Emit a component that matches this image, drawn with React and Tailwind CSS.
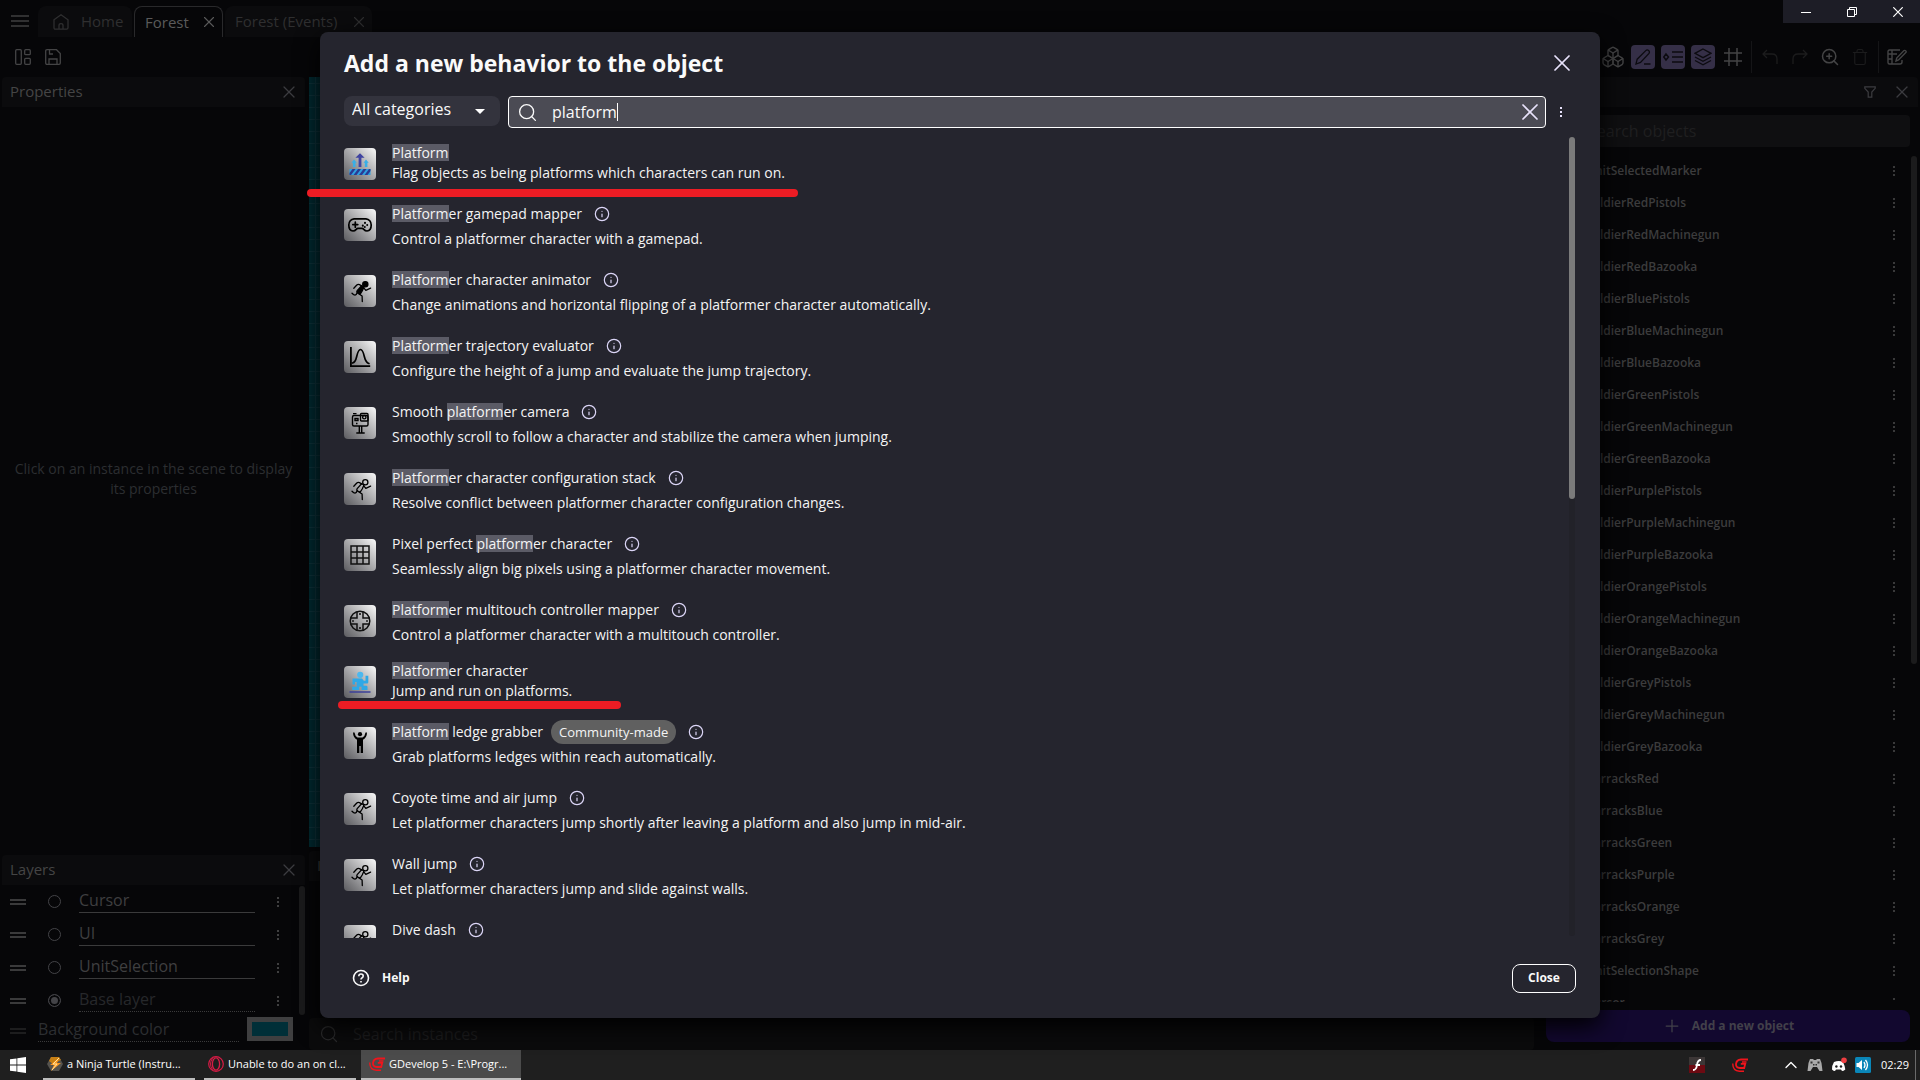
import { useState } from "react";
import {
  Boxes,
  ChevronUp,
  Info,
  Plus,
  Search,
  Trash,
  X,
  ZoomIn,
} from "lucide-react";

const QUERY = "platform";

const colors = ["Red", "Blue", "Green", "Purple", "Orange", "Grey"];
const weapons = ["Pistols", "Machinegun", "Bazooka"];

const sceneObjects = [
  "UnitSelectedMarker",
  ...colors.flatMap((c) => weapons.map((w) => `Soldier${c}${w}`)),
  ...colors.map((c) => `Barracks${c}`),
  "UnitSelectionShape",
  "Cursor",
];

const behaviors = [
  { icon: "platform", name: "Platform", text: "Flag objects as being platforms which characters can run on.", core: true },
  { icon: "gamepad", name: "Platformer gamepad mapper", text: "Control a platformer character with a gamepad." },
  { icon: "runnerFilled", name: "Platformer character animator", text: "Change animations and horizontal flipping of a platformer character automatically." },
  { icon: "curve", name: "Platformer trajectory evaluator", text: "Configure the height of a jump and evaluate the jump trajectory." },
  { icon: "camera", name: "Smooth platformer camera", text: "Smoothly scroll to follow a character and stabilize the camera when jumping." },
  { icon: "runner", name: "Platformer character configuration stack", text: "Resolve conflict between platformer character configuration changes." },
  { icon: "grid", name: "Pixel perfect platformer character", text: "Seamlessly align big pixels using a platformer character movement." },
  { icon: "dpad", name: "Platformer multitouch controller mapper", text: "Control a platformer character with a multitouch controller." },
  { icon: "character", name: "Platformer character", text: "Jump and run on platforms.", core: true },
  { icon: "grabber", name: "Platform ledge grabber", text: "Grab platforms ledges within reach automatically.", community: true },
  { icon: "runner", name: "Coyote time and air jump", text: "Let platformer characters jump shortly after leaving a platform and also jump in mid-air." },
  { icon: "runner", name: "Wall jump", text: "Let platformer characters jump and slide against walls." },
  { icon: "runner", name: "Dive dash" },
];

const Runner = ({ filled }) => (
  <g fill="none" stroke="#000" strokeWidth="1.3" strokeLinecap="round" strokeLinejoin="round">
    <circle cx="21.3" cy="9.2" r="2.6" fill={filled ? "#000" : "none"} />
    <path d="M9.8 13.2l3-3.200q1.200-1.100 2.600-.4l2.400 1.200" />
    <path
      d="M17.600 10.800l-4.400 4.800q-1 1.500.6 2.500l2.200 1.300 2.200-3.400 1.600-3.600q-.4-1.400-2.200-1.600z"
      fill={filled ? "#000" : "none"}
    />
    <path d="M19.800 12.800l2 2.500 4.800-2.200M13.200 17.800q-1.600 4.400-5.200.4M15.400 19.200l2.700 1.800.2 5.500" />
  </g>
);

const drawings = {
  platform: (
    <>
      <path d="M16 5.300l-4.600 4.400h3.200V19h2.800V9.700h3.200z" fill="#3f43a0" />
      <path d="M10 11.500l-2.500 3.200h1.400V19h2.600v-4.300h1.300zM22 11.500l-2.500 3.200h1.300V19h2.600v-4.300h1.300z" fill="#39aee6" />
      <path d="M5.500 21h21v6h-21z" fill="#2f9fe0" />
      <path d="M8.500 21h3l-4.500 6h-1.500v-2zM14 21h3l-4.500 6h-3zM19.500 21h3l-4.500 6h-3zM25 21h1.500v2l-3 4h-3z" fill="#2b3a92" />
    </>
  ),
  gamepad: (
    <g fill="none" stroke="#000" strokeWidth="1.700" strokeLinecap="round">
      <path d="M10 9.800h12a5.500 6 0 0 1 5.200 6.200q0 5.700-4.200 6-1.800 0-3.200-1.600-.8-1-1.800-1h-4q-1 0-1.800 1Q10.800 22 9 22q-4.200-.3-4.200-6A5.500 6 0 0 1 10 9.800z" />
      <path d="M8.800 15.600h5M11.300 13.200v5" />
      <path d="M21 13.800v.1M23.200 16v.1M18.800 16.600v.1M20.800 18v.1" strokeWidth="2" />
    </g>
  ),
  runnerFilled: <Runner filled />,
  runner: <Runner />,
  curve: (
    <g fill="none" stroke="#000" strokeLinecap="square">
      <path d="M6.900 6.800v18.300h18.400" strokeWidth="1.800" />
      <path d="M8.500 22q2.800-.5 4.200-6.500Q14.300 8.500 16.500 8.500t3.800 7Q21.800 21.500 24.800 22.500" strokeWidth="1.700" />
    </g>
  ),
  camera: (
    <g fill="none" stroke="#000" strokeWidth="1.400">
      <rect x="8.500" y="8.500" width="15.500" height="10.500" rx="1.500" />
      <rect x="16.500" y="6.500" width="7.500" height="7.500" rx="1" />
      <circle cx="20.300" cy="10.200" r="1.700" />
      <path d="M9 6.600h3.500M11 11.500h3v2h-3zM12 16.500h1.500M15.300 19v7M17.700 19v7M12.300 26h8.400" />
    </g>
  ),
  grid: (
    <path
      d="M7 7h18v18H7zM13 7v18M19 7v18M7 13h18M7 19h18"
      fill="none"
      stroke="#111"
      strokeWidth="1.500"
    />
  ),
  dpad: (
    <g fill="none" stroke="#111" strokeWidth="1.500">
      <circle cx="16" cy="16" r="9.800" />
      <path d="M13 6.700V13H6.700M19 6.700V13h6.300M13 25.300V19H6.700M19 25.300V19h6.300" />
      <path d="M15.200 9h1.600M15.200 23h1.600M9 15.200v1.600M23 15.200v1.600" strokeWidth="1.800" />
    </g>
  ),
  character: (
    <>
      <circle cx="16.200" cy="8.800" r="3.100" fill="#4bb8ef" />
      <path
        d="M8.500 12.500h9.500l1.800 2.200h1.700V9.800h2.800v6.500q0 1.200-1.200 1.200h-3.600v2.200h2.800q1.200 0 1.200 1.200V24h-6v-3.300h-2.300V24h-7v-3.300h4.500v-4.700h-1.700v2.500H8.500z"
        fill="#2fa8e6"
      />
      <path d="M5.500 26h21" stroke="#3b3f99" strokeWidth="1.500" />
    </>
  ),
  grabber: (
    <>
      <circle cx="16" cy="7.200" r="2.100" />
      <path d="M9 5.500h1.500q.5 3.500 3 5h5q2.500-1.500 3-5H23q0 5-4 7.200V26h-2.300v-7h-1.400v7H13V12.700Q9 10.500 9 5.500z" />
    </>
  ),
};

const BehaviorIcon = ({ kind }) => (
  <span className="h-8 w-8 shrink-0 overflow-hidden rounded bg-linear-to-bl from-[#fafafa] to-[#5c5c60]">
    <svg viewBox="0 0 32 32" className="h-8 w-8">
      {drawings[kind]}
    </svg>
  </span>
);

const Highlighted = ({ text }) => {
  const at = text.toLowerCase().indexOf(QUERY);
  if (at < 0) return <span>{text}</span>;
  return (
    <span className="whitespace-pre">
      {text.slice(0, at)}
      <mark className="inline-block h-[17px] bg-[#5b5b66] leading-[17px] text-inherit">
        {text.slice(at, at + QUERY.length)}
      </mark>
      {text.slice(at + QUERY.length)}
    </span>
  );
};

const Dots = () => (
  <svg viewBox="0 0 2 10" fill="currentColor" className="h-[10px] w-[2px]">
    <path d="M0 0h2v2H0zM0 4h2v2H0zM0 8h2v2H0z" />
  </svg>
);

const IconButton = ({ label, className = "", children }) => (
  <button aria-label={label} className={`flex h-6 w-6 items-center justify-center ${className}`}>
    {children}
  </button>
);

const GDevelopLogo = () => (
  <svg viewBox="0 0 16 16" className="h-4 w-4" fill="none" stroke="#f0141c">
    <path d="M16 2.500H9Q4.500 2.800 4 7q-.2 3.800 3.800 4h4.400l1-4.200H8.800" strokeWidth="1.800" />
    <path d="M.8 6.500Q.5 13.800 7.500 14.200h4.500M14.500 5H10" strokeWidth="1.400" />
  </svg>
);

const PanelHeader = ({ title, children }) => (
  <div className="flex h-[30px] shrink-0 items-center justify-between rounded-t bg-[#0b0b0d] pr-1 pl-2">
    <h2 className="pb-0.5 text-[15px] text-[#454545]">{title}</h2>
    <div className="flex gap-2 text-[#3c3c40]">{children}</div>
  </div>
);

const TopBar = () => (
  <header className="flex h-[37px] shrink-0 items-end">
    <button aria-label="Menu" className="mr-1 ml-2 flex h-8 w-[26px] items-center text-[#3f3f3f]">
      <svg viewBox="0 0 18 12" className="ml-[3px] h-3 w-[18px]" stroke="currentColor" strokeWidth="1.500">
        <path d="M0 1h18M0 6h18M0 11h18" />
      </svg>
    </button>
    <nav className="flex h-[31px] gap-0.5 text-[15px] text-[#2f2f30]">
      <a href="#home" className="flex w-[94px] items-center gap-3 rounded-t-lg bg-[#0b0b0d] pl-[15px]">
        <svg viewBox="0 0 16 16" className="h-4 w-4" fill="none" stroke="currentColor" strokeWidth="1.300">
          <path d="M1 5.800L8 .8l7 5v8q0 1.400-1.400 1.400H2.400Q1 15.200 1 13.800z" />
          <path d="M6 15v-3.600q0-1.800 2-1.800t2 1.800V15" />
        </svg>
        Home
      </a>
      <div className="flex w-[89px] items-center justify-between rounded-t-lg border border-b-0 border-[#29292b] pr-1 pl-2.5 font-medium text-[#5a5a5a]">
        <a href="#forest">Forest</a>
        <button aria-label="Close Forest">
          <X size={18} strokeWidth={1.5} />
        </button>
      </div>
      <div className="flex w-[147px] items-center justify-between rounded-t-lg bg-[#0b0b0d] pr-1 pl-2.5">
        <a href="#events">Forest (Events)</a>
        <button aria-label="Close Forest (Events)">
          <X size={18} strokeWidth={1.5} />
        </button>
      </div>
    </nav>
    <div className="ml-auto flex h-[23px] self-start bg-[#1d1d26]">
      <button aria-label="Minimize" className="flex w-[46px] items-center justify-center">
        <svg viewBox="0 0 10 10" className="h-[10px] w-[10px]" stroke="#fff">
          <path d="M0 5.500h10" />
        </svg>
      </button>
      <button aria-label="Restore" className="flex w-[46px] items-center justify-center">
        <svg viewBox="0 0 10 10" className="h-[10px] w-[10px]" fill="none" stroke="#fff">
          <path d="M.5 2.500h7v7h-7zM2.500 2.500v-2h7v7h-2" />
        </svg>
      </button>
      <button aria-label="Close window" className="flex w-[45px] items-center justify-center">
        <svg viewBox="0 0 10 10" className="h-[10px] w-[10px]" stroke="#fff" strokeWidth="1.200">
          <path d="M.3.3l9.400 9.400M9.700.3L.3 9.700" />
        </svg>
      </button>
    </div>
  </header>
);

const Toolbar = () => (
  <div className="flex h-10 shrink-0 items-center justify-between pr-[11px] pl-[11px] text-[#444445]">
    <div className="flex gap-1.5">
      <IconButton label="Open panels">
        <svg viewBox="0 0 16 16" className="h-4 w-4" fill="none" stroke="currentColor" strokeWidth="1.300">
          <rect x=".7" y=".7" width="5.600" height="14.600" rx="1" />
          <rect x="9.700" y=".7" width="5.600" height="5" rx="1" />
          <rect x="9.700" y="9.300" width="5.600" height="6" rx="1" />
        </svg>
      </IconButton>
      <IconButton label="Save">
        <svg viewBox="0 0 16 16" className="h-4 w-4" fill="none" stroke="currentColor" strokeWidth="1.300">
          <path d="M2 .7h9.500l3.800 3.800V14q0 1.300-1.300 1.300H2Q.7 15.300.7 14V2Q.7.7 2 .7z" />
          <path d="M4 15v-5h8v5M4.500 1v4H8" />
        </svg>
      </IconButton>
    </div>
    <div className="flex items-center gap-1.5">
      <IconButton label="Object groups">
        <Boxes size={24} strokeWidth={1.4} />
      </IconButton>
      <IconButton label="Edit objects" className="rounded bg-[#352f47] text-[#0c0b10]">
        <svg viewBox="0 0 16 16" className="h-4 w-4" fill="none" stroke="currentColor" strokeWidth="1.300">
          <path d="M1 15l1.200-4.800L11 1.400q1.200-1 2.600.2t.4 2.800L5.500 13.400zM9 15h6.500" />
        </svg>
      </IconButton>
      <IconButton label="Instances list" className="rounded bg-[#352f47] text-[#0c0b10]">
        <svg viewBox="0 0 20 16" className="h-4 w-5" fill="none" stroke="currentColor" strokeWidth="1.500">
          <path d="M3 5L.8 8 3 11l2.500-3zM9 3h11M9 8h11M9 13h11" />
        </svg>
      </IconButton>
      <IconButton label="Layers" className="rounded bg-[#352f47] text-[#0c0b10]">
        <svg viewBox="0 0 18 18" className="h-[18px] w-[18px]" fill="none" stroke="currentColor" strokeWidth="1.400">
          <path d="M9 1l8 4.300-8 4.300-8-4.300zM1 9l8 4.300L17 9M1 12.500l8 4.300 8-4.300" />
        </svg>
      </IconButton>
      <IconButton label="Grid">
        <svg viewBox="0 0 18 18" className="h-[18px] w-[18px]" stroke="currentColor" strokeWidth="1.500">
          <path d="M5 0v18M13 0v18M0 5h18M0 13h18" />
        </svg>
      </IconButton>
      <span className="h-8 w-px bg-[#151517]" />
      <IconButton label="Undo" className="text-[#1c1c1d]">
        <svg viewBox="0 0 16 16" className="h-4 w-4" fill="none" stroke="currentColor" strokeWidth="1.300">
          <path d="M5 1L1 5l4 4M1 5h9q5 0 5 5v5" />
        </svg>
      </IconButton>
      <IconButton label="Redo" className="text-[#1c1c1d]">
        <svg viewBox="0 0 16 16" className="h-4 w-4" fill="none" stroke="currentColor" strokeWidth="1.300">
          <path d="M11 1l4 4-4 4M15 5H6q-5 0-5 5v5" />
        </svg>
      </IconButton>
      <IconButton label="Zoom in">
        <ZoomIn size={20} strokeWidth={1.8} />
      </IconButton>
      <IconButton label="Delete" className="text-[#1c1c1d]">
        <Trash size={18} strokeWidth={1.5} />
      </IconButton>
      <span className="h-8 w-px bg-[#151517]" />
      <IconButton label="Scene properties">
        <svg viewBox="0 0 20 16" className="h-4 w-5" fill="none" stroke="currentColor" strokeWidth="1.400">
          <path d="M13 1H2.500Q1 1 1 2.500v11Q1 15 2.500 15H13q2 0 2-2v-2M5 1v14M1 5h4M1 10h4M5 5h5" />
          <path d="M9 12l.7-3L17 1.600q1-.6 1.800.3t0 1.700L11.500 11z" />
        </svg>
      </IconButton>
    </div>
  </div>
);

const LayerRow = ({ name, selected, onSelect, base }) => (
  <div className="flex h-[33px] items-center pl-2.5">
    <svg viewBox="0 0 16 6" className="h-1.5 w-4" fill="#3a3a3b">
      <path d="M0 0h16v2H0zM0 4h16v2H0z" />
    </svg>
    <input
      type="radio"
      name="layer"
      aria-label={`Select ${name}`}
      checked={selected}
      onChange={onSelect}
      className="ml-[22px] h-[13px] w-[13px] appearance-none rounded-full border border-[#434347] checked:bg-[#434347] checked:shadow-[inset_0_0_0_2px_#060608]"
    />
    <input
      aria-label="Layer name"
      defaultValue={name}
      className={`ml-[18px] h-[23px] w-44 border-b bg-transparent pb-0.5 text-base outline-none ${
        base ? "border-dotted border-[#3a3a3b] text-[#26282b]" : "border-[#3a3a3b] text-[#3f3f40]"
      }`}
    />
    <button aria-label={`${name} options`} className="ml-[22px] text-[#3f3f40]">
      <Dots />
    </button>
  </div>
);

const LeftColumn = () => {
  const [layer, setLayer] = useState("Base layer");
  return (
    <aside className="mx-0.5 flex w-[303px] shrink-0 flex-col">
      <section className="flex min-h-0 flex-1 flex-col">
        <PanelHeader title="Properties">
          <IconButton label="Close properties">
            <X size={20} strokeWidth={1.5} />
          </IconButton>
        </PanelHeader>
        <div className="flex flex-1 items-center justify-center px-2 text-center">
          <p className="text-sm leading-5 text-[#2c2e31]">
            Click on an instance in the scene to display its properties
          </p>
        </div>
      </section>
      <section className="mt-1 flex h-[195px] flex-col">
        <PanelHeader title="Layers">
          <IconButton label="Close layers">
            <X size={20} strokeWidth={1.5} />
          </IconButton>
        </PanelHeader>
        <div className="-ml-0.5 flex h-[132px] justify-between">
          <div>
            {["Cursor", "UI", "UnitSelection", "Base layer"].map((name) => (
              <LayerRow
                key={name}
                name={name}
                base={name === "Base layer"}
                selected={layer === name}
                onSelect={() => setLayer(name)}
              />
            ))}
          </div>
          <div className="mt-px mb-0.5 w-1.5 rounded-full bg-[#1b1b1c]" />
        </div>
        <div className="-ml-0.5 flex h-[33px] items-start pl-2.5">
          <svg viewBox="0 0 16 6" className="mt-[11px] h-1.5 w-4" fill="#1d1d1e">
            <path d="M0 0h16v2H0zM0 4h16v2H0z" />
          </svg>
          <label
            htmlFor="background"
            className="ml-3 h-[25px] w-[201px] border-b border-dotted border-[#3a3a3b] text-base text-[#2c2e31]"
          >
            Background color
          </label>
          <button id="background" className="ml-2 h-6 w-[46px] border-[5px] border-[#3f3f40] bg-[#002f38]" />
        </div>
      </section>
    </aside>
  );
};

const SceneColumn = () => (
  <main className="mx-0.5 flex min-w-0 flex-1 flex-col">
    <div className="flex-1 bg-[#002a31] bg-[linear-gradient(#0e323a_1px,transparent_1px),linear-gradient(90deg,#0e323a_1px,transparent_1px)] bg-size-[12px_12px] bg-position-[6px_6px]" />
    <section className="mt-1 flex h-[199px] flex-col">
      <PanelHeader title="Instances list" />
      <div className="flex-1" />
      <label className="flex h-8 items-center gap-3.5 rounded bg-[#0b0b0c] pl-2.5 text-[#2a2a2b]">
        <Search size={20} strokeWidth={1.5} />
        <input
          aria-label="Search instances"
          placeholder="Search instances"
          className="flex-1 bg-transparent text-base outline-none placeholder:text-[#1d1d1e]"
        />
      </label>
    </section>
  </main>
);

const ObjectsColumn = () => (
  <aside className="mx-0.5 flex w-[380px] shrink-0 flex-col">
    <PanelHeader title="Objects">
      <IconButton label="Filter objects">
        <svg viewBox="0 0 12 12" className="h-3 w-3" fill="none" stroke="currentColor" strokeWidth="1.200">
          <path d="M.8.800h10.400v1.500L7.800 6v5.200H4.200V6L.8 2.300z" />
        </svg>
      </IconButton>
      <IconButton label="Close objects">
        <X size={20} strokeWidth={1.5} />
      </IconButton>
    </PanelHeader>
    <label className="mx-2 mt-2 flex h-8 shrink-0 items-center gap-3 rounded bg-[#0f0f11] pl-2.5 text-[#2a2a2b]">
      <Search size={20} strokeWidth={1.5} />
      <input
        aria-label="Search objects"
        placeholder="Search objects"
        className="flex-1 bg-transparent text-base outline-none placeholder:text-[#1f1f20]"
      />
    </label>
    <div className="mt-2 flex min-h-0 flex-1 justify-between">
      <ul className="flex-1 overflow-hidden">
        {sceneObjects.map((name) => (
          <li key={name} className="flex h-8 items-center pr-4 pl-5">
            <span className="h-4 w-4 rounded-sm bg-[#151517]" />
            <span className="ml-3 text-xs font-semibold text-[#3c3c3d]">{name}</span>
            <button aria-label={`${name} options`} className="ml-auto text-[#39393a]">
              <Dots />
            </button>
          </li>
        ))}
      </ul>
      <div className="mt-px mr-px h-[508px] w-1.5 rounded-full bg-[#1b1b1c]" />
    </div>
    <button className="mx-2 my-2 flex h-8 shrink-0 items-center justify-center gap-2.5 rounded-lg bg-[#12082f] text-xs font-bold text-[#42404a]">
      <Plus size={20} strokeWidth={1.5} />
      Add a new object
    </button>
  </aside>
);

const BehaviorRow = ({ behavior }) => (
  <li className="flex items-center gap-4 py-[7px]">
    <BehaviorIcon kind={behavior.icon} />
    <div className="pb-0.5 text-sm leading-5 font-medium text-[#f4f4f4]">
      <div className={behavior.core ? "flex h-5 items-center" : "flex h-[30px] items-center"}>
        <Highlighted text={behavior.name} />
        {behavior.community && (
          <span className="ml-2 flex h-6 items-center rounded-full bg-[#606060] px-2 text-[13px]">
            Community-made
          </span>
        )}
        {!behavior.core && (
          <button aria-label={`About ${behavior.name}`} className="ml-3 text-[#dcd6f7]">
            <Info size={16} strokeWidth={1.8} />
          </button>
        )}
      </div>
      <p className="h-5 whitespace-nowrap">{behavior.text}</p>
    </div>
  </li>
);

const BehaviorDialog = () => {
  const [query, setQuery] = useState(QUERY);
  return (
    <div className="absolute inset-0 flex justify-center py-8">
      <div
        role="dialog"
        aria-labelledby="dialog-title"
        className="flex w-2/3 flex-col rounded-lg bg-[#25252e] px-6 text-[#fafafa] shadow-[0_8px_24px_#000]"
      >
        <div className="flex h-16 shrink-0 items-center justify-between pb-0.5">
          <h1 id="dialog-title" className="text-[23px] font-bold">
            Add a new behavior to the object
          </h1>
          <button aria-label="Close dialog" className="text-[#e8e2fb]">
            <X size={28} strokeWidth={1.5} />
          </button>
        </div>
        <div className="flex h-10 shrink-0 items-start">
          <div className="relative w-[156px]">
            <select
              aria-label="Category"
              className="h-[30px] w-full appearance-none rounded-lg bg-[#33333d] pb-1 pl-2 text-base outline-none"
            >
              <option>All categories</option>
            </select>
            <svg viewBox="0 0 10 5" className="pointer-events-none absolute top-[13px] right-[15px] h-[5px] w-[10px]" fill="#fff">
              <path d="M0 0h10L5 5z" />
            </svg>
          </div>
          <label className="ml-2 flex h-8 flex-1 items-center rounded border border-white bg-[#4b4b54] pr-px pl-2">
            <Search size={21} strokeWidth={1.5} />
            <input
              aria-label="Search behaviors"
              value={query}
              onChange={(e) => setQuery(e.target.value)}
              className="ml-3.5 field-sizing-content bg-transparent text-base outline-none"
            />
            <span className="h-[18px] w-px bg-white" />
            <button aria-label="Clear search" onClick={() => setQuery("")} className="ml-auto text-[#e8e2fb]">
              <X size={28} strokeWidth={1.5} />
            </button>
          </label>
          <button aria-label="More options" className="flex h-8 w-[30px] items-center justify-center text-[#e8e2fb]">
            <Dots />
          </button>
        </div>
        <div className="flex min-h-0 flex-1">
          <ul className="flex-1 overflow-hidden">
            {behaviors.map((b) => (
              <BehaviorRow key={b.name} behavior={b} />
            ))}
          </ul>
          <div className="mt-px mr-px mb-0.5 w-1.5 rounded-full bg-[#222229]">
            <div className="h-[362px] rounded-full bg-[#7b7b7b]" />
          </div>
        </div>
        <div className="flex h-20 shrink-0 items-center justify-between">
          <button className="flex items-center gap-3 pl-2 text-xs font-bold">
            <svg viewBox="0 0 18 18" className="h-[18px] w-[18px]" fill="none" stroke="currentColor" strokeWidth="1.600">
              <circle cx="9" cy="9" r="7.500" />
              <path d="M6.800 7.200Q6.800 5 9 5t2.200 2q0 1.300-1.300 2-.9.500-.9 1.600M9 12v1.400" />
            </svg>
            Help
          </button>
          <button className="h-[29px] w-16 rounded-lg border border-white text-xs font-bold">Close</button>
        </div>
      </div>
    </div>
  );
};

const Taskbar = () => (
  <footer className="flex h-[30px] shrink-0 bg-[#1f1f1f] text-[11px] whitespace-nowrap text-white">
    <button aria-label="Start" className="mr-4 ml-2.5">
      <svg viewBox="0 0 16 16" className="h-4 w-4" fill="#fff">
        <path d="M0 2.300l6.500-.9v6.200H0zM7.300 1.300L16 0v7.600H7.300zM0 8.400h6.500v6.200L0 13.700zM7.300 8.400H16V16l-8.700-1.300z" />
      </svg>
    </button>
    <button className="ml-px flex w-[152px] items-center gap-1 border-b-2 border-[#bdbdbd] pl-1">
      <svg viewBox="0 0 16 16" className="h-4 w-4 shrink-0">
        <path d="M4 1h8l4 7-4 7H4L0 8z" fill="#55534e" />
        <path d="M4 1h8l2 3-8 4-4-3z" fill="#c77f14" />
        <path d="M12 2L3 9h4l-3 6 10-8h-4z" fill="#ff9a1f" />
        <path d="M12 2L6 8h4l-5 6" stroke="#ffe2a0" fill="none" />
      </svg>
      a Ninja Turtle (Instru...
    </button>
    <button className="ml-[9px] flex w-[152px] items-center gap-1 border-b-2 border-[#bdbdbd] pl-1">
      <svg viewBox="0 0 16 16" className="h-4 w-4 shrink-0" fill="none" stroke="#d81b46">
        <circle cx="8" cy="8" r="7.300" strokeWidth="1.200" />
        <ellipse cx="8" cy="8" rx="3.600" ry="6.200" strokeWidth="1.300" />
        <path d="M4.500 2.300q-4 5.700 0 11.400" />
      </svg>
      Unable to do an on cl...
    </button>
    <button className="ml-[5px] flex w-[160px] items-center gap-1 border-b-2 border-[#bdbdbd] bg-[#4b4b4b] pl-2">
      <GDevelopLogo />
      GDevelop 5 - E:\Progr...
    </button>
    <div className="ml-auto flex items-center">
      <svg viewBox="0 0 16 16" className="h-4 w-4">
        <path d="M0 0h16v8H0z" fill="#3c3636" />
        <path d="M0 8h16v8H0z" fill="#6d0a12" />
        <path d="M12 3Q8.500 3 8 8q-.6 5-4 5M6.500 8H11" stroke="#fff" strokeWidth="1.800" fill="none" />
      </svg>
      <span className="ml-[27px]">
        <GDevelopLogo />
      </span>
      <ChevronUp size={20} strokeWidth={1.6} className="ml-[33px]" />
      <svg viewBox="0 0 16 14" className="ml-1.5 h-[14px] w-4">
        <path d="M3 1h3l1 1h2l1-1h3l1.500 4 1 8h-3l-2.500-4h-4L3.500 13h-3l1-8z" fill="#a9a9a9" />
        <path d="M3.500 3.500h2v2h-2zM10.500 3.500h2v2h-2zM6 6h1.500v1.500H6zM8.500 6H10v1.500H8.500z" fill="#333" />
      </svg>
      <svg viewBox="0 0 16 16" className="ml-2 h-4 w-4">
        <path d="M3 5q5-2 9 0 2 4 2.300 7.500Q12.500 14 11 14l-1-1.500H5L4 14q-1.500 0-3-1.500Q.8 8.500 3 5z" fill="#fff" />
        <circle cx="5.400" cy="9.500" r="1.200" fill="#1f1f1f" />
        <circle cx="10" cy="9.500" r="1.200" fill="#1f1f1f" />
        <circle cx="13" cy="3.200" r="2.800" fill="#ee3f42" />
      </svg>
      <svg viewBox="0 0 16 16" className="ml-2 h-4 w-4">
        <rect width="16" height="16" rx="1.500" fill="#0a86b8" />
        <path d="M1.500 6h2L7 3v10l-3.500-3h-2z" fill="#fff" />
        <path d="M9 5q2 3 0 6M10.500 3q4 5 0 10" stroke="#fff" strokeWidth="1.300" fill="none" />
      </svg>
      <time className="ml-2.5">02:29</time>
      <span className="mr-1 ml-1.5 h-[30px] w-px bg-[#6a6a6a]" />
    </div>
  </footer>
);

const App = () => (
  <div className="flex h-screen flex-col overflow-hidden bg-[#060608] font-['Open_Sans',sans-serif]">
    <div className="relative flex min-h-0 flex-1 flex-col">
      <TopBar />
      <Toolbar />
      <div className="flex min-h-0 flex-1">
        <LeftColumn />
        <SceneColumn />
        <ObjectsColumn />
      </div>
      <BehaviorDialog />
      {/* red underlines drawn over the two core behaviors */}
      <div className="pointer-events-none absolute top-[189px] left-[307px] h-2 w-[491px] rounded-full bg-[#ed1c24]" />
      <div className="pointer-events-none absolute top-[701px] left-[338px] h-2 w-[283px] rounded-full bg-[#ed1c24]" />
    </div>
    <Taskbar />
  </div>
);

export default App;
